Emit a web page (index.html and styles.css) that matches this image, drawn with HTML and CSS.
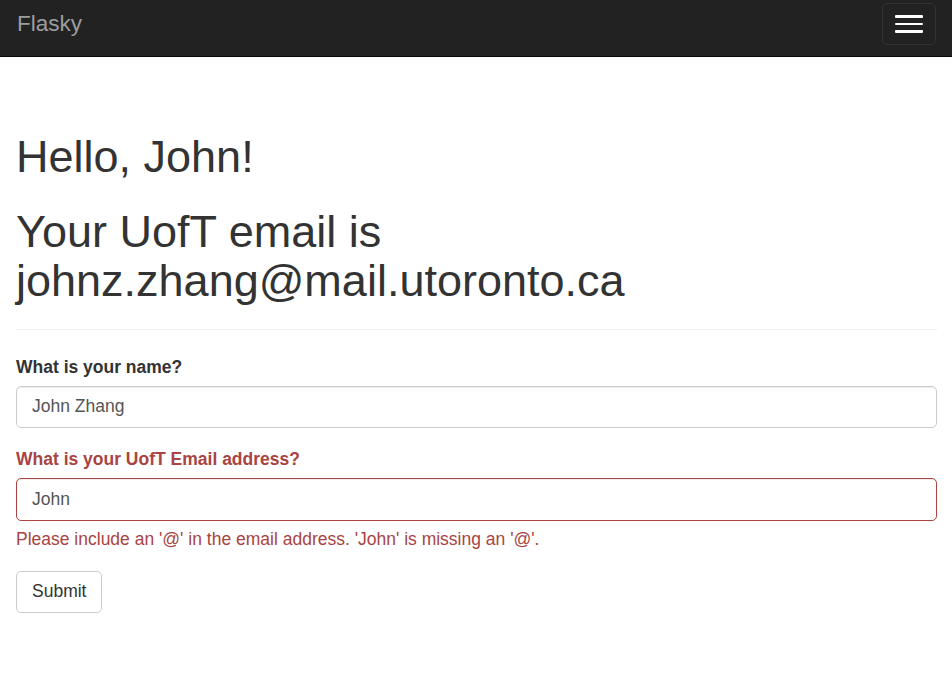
FILE: index.html
```html
<!DOCTYPE html>
<html lang="en">
<head>
<meta charset="utf-8">
<title>Flasky</title>
<link rel="stylesheet" href="styles.css">
</head>
<body>
<nav class="navbar">
  <a class="brand" href="#">Flasky</a>
  <button class="toggle" type="button" aria-label="Toggle navigation">
    <span class="bar"></span>
    <span class="bar"></span>
    <span class="bar"></span>
  </button>
</nav>
<main class="container">
  <div class="page-header">
    <h1 class="title">Hello, John!</h1>
    <h1 class="title title-second">Your UofT email is johnz.zhang@mail.utoronto.ca</h1>
  </div>
  <form class="form">
    <div class="form-group">
      <label class="label" for="name">What is your name?</label>
      <input class="form-control" id="name" type="text" value="John Zhang">
    </div>
    <div class="form-group has-error">
      <label class="label" for="email">What is your UofT Email address?</label>
      <input class="form-control" id="email" type="text" value="John">
      <span class="help-block">Please include an '@' in the email address. 'John' is missing an '@'.</span>
    </div>
    <div class="form-group">
      <button class="btn" type="button">Submit</button>
    </div>
  </form>
</main>
</body>
</html>
```

FILE: styles.css
```css
* { box-sizing: border-box; }

html, body {
  margin: 0;
  padding: 0;
}

body {
  font-family: "Liberation Sans", Arial, Helvetica, sans-serif;
  font-size: 17.5px;
  line-height: 25px;
  color: #333;
  background: #fff;
}

.navbar {
  display: flex;
  justify-content: space-between;
  align-items: flex-start;
  height: 57px;
  padding: 0 16px 0 17px;
  background: #222;
  border-bottom: 1px solid #080808;
}

.brand {
  display: block;
  padding-top: 11px;
  font-size: 22.5px;
  line-height: 25px;
  color: #9d9d9d;
  text-decoration: none;
}

.toggle {
  display: flex;
  flex-direction: column;
  justify-content: center;
  align-items: center;
  gap: 5px;
  width: 54px;
  height: 42px;
  margin-top: 3px;
  padding: 0;
  background: transparent;
  border: 1px solid #333;
  border-radius: 5px;
}

.bar {
  display: block;
  width: 28px;
  height: 2.5px;
  background: #fff;
  border-radius: 1px;
}

.container {
  padding: 0 15px 0 16px;
}

.page-header {
  margin: 75px 0 25px;
  padding-bottom: 11px;
  border-bottom: 1px solid #eee;
}

.title {
  margin: 0;
  font-size: 45px;
  line-height: 49.5px;
  font-weight: 500;
  color: #333;
}

.title-second {
  margin-top: 25px;
  margin-bottom: 12px;
}

.form-group {
  margin-bottom: 19px;
}

.label {
  display: block;
  margin-bottom: 6px;
  font-weight: bold;
  line-height: 25px;
}

.form-control {
  display: block;
  width: 100%;
  height: 42.5px;
  padding: 7px 15px;
  font-family: inherit;
  font-size: 17.5px;
  line-height: 25px;
  color: #555;
  background: #fff;
  border: 1px solid #ccc;
  border-radius: 5px;
  box-shadow: inset 0 1px 1px rgba(0, 0, 0, .075);
  outline: none;
}

.has-error .label,
.has-error .help-block {
  color: #a94442;
}

.has-error .form-control {
  border-color: #a94442;
}

.help-block {
  display: block;
  margin-top: 6px;
  line-height: 25px;
}

.btn {
  display: inline-block;
  height: 42px;
  padding: 7px 15px;
  font-family: inherit;
  font-size: 17.5px;
  line-height: 25px;
  color: #333;
  background: #fff;
  border: 1px solid #ccc;
  border-radius: 5px;
}
```
